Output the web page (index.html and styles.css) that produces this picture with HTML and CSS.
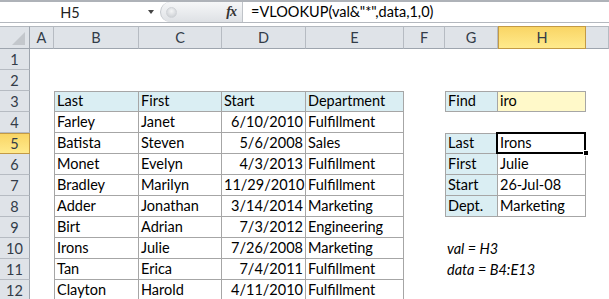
FILE: index.html
```html
<!DOCTYPE html>
<html lang="en">
<head>
  <meta charset="UTF-8" />
  <title>VLOOKUP partial match</title>
  <link rel="stylesheet" href="styles.css">
</head>
<body>
  <div class="formula-bar">
    <div class="name-box">
      <span class="name">H5</span>
      <span class="drop"></span>
    </div>
    <div class="fx-area">
      <span class="grip"></span>
      <span class="fx">fx</span>
    </div>
    <div class="formula">=VLOOKUP(val&amp;"*",data,1,0)</div>
  </div>

  <table class="sheet">
    <colgroup>
      <col class="c-rh"><col class="c-a"><col class="c-b"><col class="c-c"><col class="c-d">
      <col class="c-e"><col class="c-f"><col class="c-g"><col class="c-h"><col class="c-i">
    </colgroup>
    <tr class="head">
      <th class="corner"><span class="tri"></span></th>
      <th>A</th><th>B</th><th>C</th><th>D</th><th>E</th><th>F</th><th>G</th><th class="on">H</th><th></th>
    </tr>
    <tr><td class="rh">1</td><td></td><td></td><td></td><td></td><td></td><td></td><td></td><td></td><td></td></tr>
    <tr><td class="rh">2</td><td></td><td></td><td></td><td></td><td></td><td></td><td></td><td></td><td></td></tr>
    <tr>
      <td class="rh">3</td><td></td>
      <td class="b bl bt hd">Last</td><td class="b bt hd">First</td><td class="b bt hd">Start</td><td class="b bt hd">Department</td>
      <td></td>
      <td class="b bl bt hd">Find</td><td class="b bt find">iro</td><td></td>
    </tr>
    <tr>
      <td class="rh">4</td><td></td>
      <td class="b bl">Farley</td><td class="b">Janet</td><td class="b num">6/10/2010</td><td class="b">Fulfillment</td>
      <td></td><td></td><td></td><td></td>
    </tr>
    <tr>
      <td class="rh on">5</td><td></td>
      <td class="b bl">Batista</td><td class="b">Steven</td><td class="b num">5/6/2008</td><td class="b">Sales</td>
      <td></td>
      <td class="b bl bt hd">Last</td><td class="b bt sel">Irons</td><td></td>
    </tr>
    <tr>
      <td class="rh">6</td><td></td>
      <td class="b bl">Monet</td><td class="b">Evelyn</td><td class="b num">4/3/2013</td><td class="b">Fulfillment</td>
      <td></td>
      <td class="b bl hd">First</td><td class="b">Julie</td><td></td>
    </tr>
    <tr>
      <td class="rh">7</td><td></td>
      <td class="b bl">Bradley</td><td class="b">Marilyn</td><td class="b num">11/29/2010</td><td class="b">Fulfillment</td>
      <td></td>
      <td class="b bl hd">Start</td><td class="b">26-Jul-08</td><td></td>
    </tr>
    <tr>
      <td class="rh">8</td><td></td>
      <td class="b bl">Adder</td><td class="b">Jonathan</td><td class="b num">3/14/2014</td><td class="b">Marketing</td>
      <td></td>
      <td class="b bl hd">Dept.</td><td class="b">Marketing</td><td></td>
    </tr>
    <tr>
      <td class="rh">9</td><td></td>
      <td class="b bl">Birt</td><td class="b">Adrian</td><td class="b num">7/3/2012</td><td class="b">Engineering</td>
      <td></td><td></td><td></td><td></td>
    </tr>
    <tr>
      <td class="rh">10</td><td></td>
      <td class="b bl">Irons</td><td class="b">Julie</td><td class="b num">7/26/2008</td><td class="b">Marketing</td>
      <td></td>
      <td class="note">val = H3</td><td></td><td></td>
    </tr>
    <tr>
      <td class="rh">11</td><td></td>
      <td class="b bl">Tan</td><td class="b">Erica</td><td class="b num">7/4/2011</td><td class="b">Fulfillment</td>
      <td></td>
      <td class="note">data = B4:E13</td><td></td><td></td>
    </tr>
    <tr>
      <td class="rh">12</td><td></td>
      <td class="b bl">Clayton</td><td class="b">Harold</td><td class="b num">4/11/2010</td><td class="b">Fulfillment</td>
      <td></td><td></td><td></td><td></td>
    </tr>
  </table>
</body>
</html>
```

FILE: styles.css
```css
body {
  margin: 0;
  width: 609px;
  height: 299px;
  overflow: hidden;
  background: #fff;
  font-family: Lato, "Liberation Sans", sans-serif;
  font-size: 14.5px;
  color: #000;
}

/* formula bar */
.formula-bar {
  display: flex;
  height: 20px;
  border-top: 2px solid #aeb2b8;
  border-bottom: 1px solid #b4b8be;
  margin-bottom: 3px;
}
.name-box {
  width: 160px;
  display: flex;
  align-items: center;
}
.name {
  width: 140px;
  text-align: center;
  color: #222;
}
.drop {
  margin-left: 8px;
  width: 0;
  height: 0;
  border-left: 3.5px solid transparent;
  border-right: 3.5px solid transparent;
  border-top: 4px solid #444;
}
.fx-area {
  width: 83px;
  display: flex;
  align-items: center;
  justify-content: space-between;
  padding: 0 6px 0 5px;
  box-sizing: border-box;
  border-radius: 10px 0 0 10px;
  border-left: 1px solid #c3c7cc;
  border-right: 1px solid #bfc3c8;
  background: linear-gradient(#f6f7f8, #dee1e5);
}
.grip {
  width: 9px;
  height: 9px;
  border-radius: 50%;
  background: radial-gradient(circle at 50% 35%, #f4f5f6, #c5c9ce);
  border: 1px solid #d0d3d7;
}
.fx {
  font-family: "Liberation Serif", serif;
  font-style: italic;
  font-weight: bold;
  font-size: 14px;
  color: #333;
  letter-spacing: -1px;
}
.formula {
  padding-left: 8px;
  line-height: 20px;
  white-space: nowrap;
}

/* sheet grid */
.sheet {
  border-collapse: separate;
  border-spacing: 0;
  table-layout: fixed;
  width: 609px;
}
.c-rh { width: 30px; }
.c-a { width: 24px; }
.c-b { width: 85px; }
.c-c { width: 83px; }
.c-d { width: 84px; }
.c-e { width: 98px; }
.c-f { width: 41px; }
.c-g { width: 53px; }
.c-h { width: 88px; }
.c-i { width: 23px; }

tr { height: 21px; }
tr.head { height: 23px; }

th {
  padding: 0;
  font-weight: normal;
  color: #333c48;
  background: #dfe3e8;
  border-top: 1px solid #b3b8be;
  border-bottom: 1px solid #9ea5ae;
  border-right: 1px solid #b6bbc2;
  text-align: center;
  vertical-align: middle;
}
th.corner {
  position: relative;
  border-right-color: #9ea5ae;
}
.tri {
  position: absolute;
  right: 4px;
  bottom: 3px;
  width: 0;
  height: 0;
  border-left: 13px solid transparent;
  border-bottom: 13px solid #c3c7cc;
}
th.on {
  background: linear-gradient(#f9d565, #ffea8c);
  border: 1px solid #c39a45;
}

td {
  padding: 0 2px 2px;
  line-height: 17px;
  vertical-align: bottom;
  white-space: nowrap;
  overflow: visible;
}
td.rh {
  padding: 0;
  text-align: center;
  vertical-align: middle;
  color: #333c48;
  background: #dfe3e8;
  border-right: 1px solid #9ea5ae;
  border-bottom: 1px solid #b6bbc2;
}
td.rh.on {
  background: linear-gradient(#f9d565, #ffea8c);
  border: 1px solid #c39a45;
  border-left: none;
}

.b {
  border-right: 1px solid #a6a6a6;
  border-bottom: 1px solid #a6a6a6;
}
.bl { border-left: 1px solid #a6a6a6; }
.bt { border-top: 1px solid #a6a6a6; }
.hd { background: #daeef3; }
.find { background: #fff9c9; }
.num { text-align: right; }
.note { font-style: italic; }

.sel { position: relative; }
.sel::after {
  content: "";
  position: absolute;
  left: -2px;
  top: -2px;
  right: -1px;
  bottom: -1px;
  border: 2px solid #000;
}
.sel::before {
  content: "";
  position: absolute;
  right: -4px;
  bottom: -3px;
  width: 4px;
  height: 4px;
  background: #000;
  border: 1px solid #fff;
  z-index: 1;
}
```
